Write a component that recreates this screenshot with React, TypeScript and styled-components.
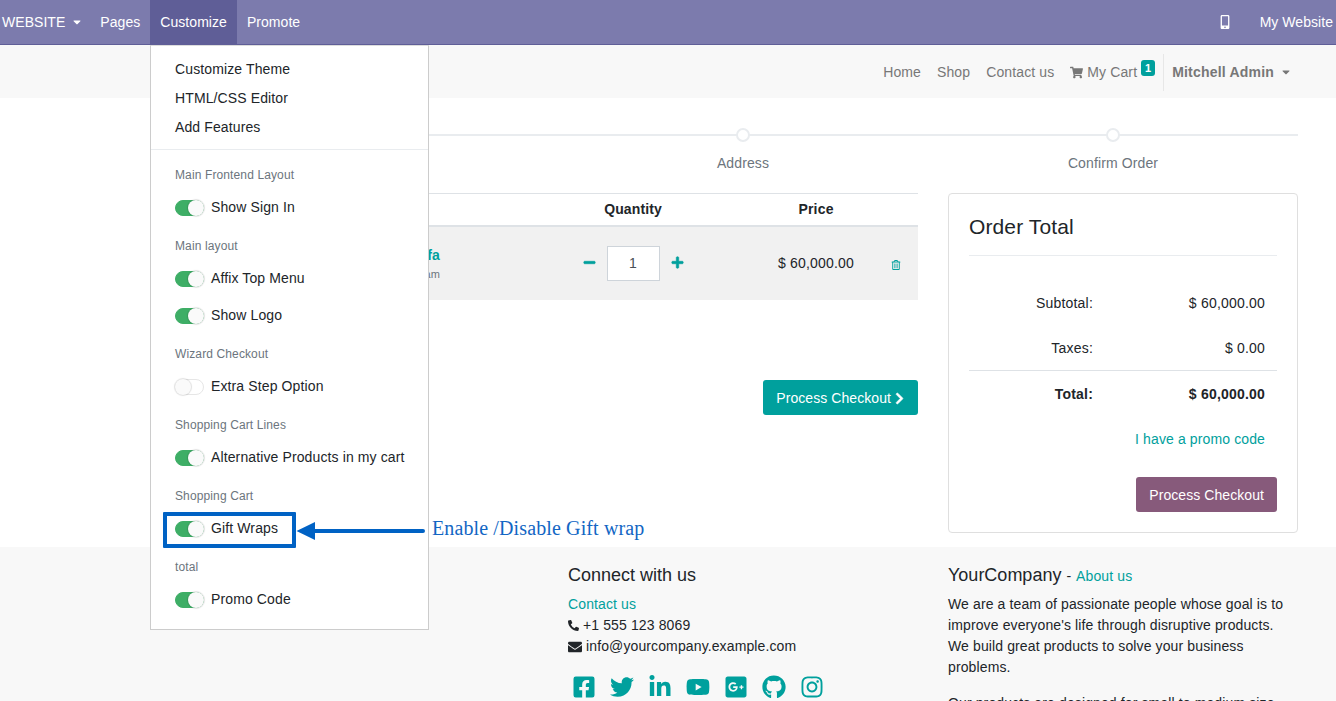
import styled, { createGlobalStyle } from 'styled-components';
import {
  FaCaretDown,
  FaChevronRight,
  FaEnvelope,
  FaFacebookSquare,
  FaGithub,
  FaGooglePlusSquare,
  FaInstagram,
  FaLinkedinIn,
  FaMinus,
  FaMobileAlt,
  FaPhoneAlt,
  FaPlus,
  FaRegTrashAlt,
  FaShoppingCart,
  FaTwitter,
  FaYoutube,
} from 'react-icons/fa';

const GlobalStyle = createGlobalStyle`
  html, body {
    margin: 0;
    height: 701px;
    overflow: hidden;
    background: #fff;
    font-family: "Liberation Sans", Arial, sans-serif;
    font-size: 14px;
    line-height: 21px;
    letter-spacing: 0.12px;
    color: #212529;
  }
  * { box-sizing: border-box; }
`;

const Page = styled.div`
  position: relative;
  width: 1336px;
  height: 701px;
  overflow: hidden;
`;

const TopBar = styled.div`
  display: flex;
  align-items: stretch;
  height: 45px;
  background: #7c7bad;
  border-bottom: 1px solid #5f5e97;
  color: #fff;
  letter-spacing: 0.05px;
`;

const TopItem = styled.div<{ $active?: boolean }>`
  display: flex;
  align-items: center;
  gap: 6px;
  height: 44px;
  padding: 0 10px;
  background: ${(p) => (p.$active ? '#5f5e97' : 'transparent')};
`;

const SiteItem = styled(TopItem)`
  padding: 0 7px 0 2px;
`;

const TopRight = styled.div`
  display: flex;
  align-items: center;
  margin-left: auto;
  padding-right: 3px;
`;

const PhoneIcon = styled.span`
  display: flex;
  margin-right: 28px;
  font-size: 14px;
`;

const NavBar = styled.nav`
  display: flex;
  align-items: center;
  justify-content: flex-end;
  height: 53px;
  padding: 1px 44px 0 0;
  background: #f8f8f8;
  color: #777;
`;

const NavLink = styled.span`
  margin-right: 16px;
`;

const CartLink = styled.span`
  display: flex;
  align-items: center;
  gap: 4px;
`;

const Badge = styled.span`
  align-self: flex-start;
  width: 14px;
  height: 16px;
  margin: 14px 8px 0 4px;
  border-radius: 3px;
  background: #00a09d;
  color: #fff;
  font-size: 11px;
  font-weight: 700;
  line-height: 16px;
  text-align: center;
`;

const UserLink = styled.span`
  display: flex;
  align-items: center;
  gap: 6px;
  height: 37px;
  padding-left: 8px;
  border-left: 1px solid #e7e7e7;
  font-weight: 700;
  letter-spacing: 0.2px;
`;

const Main = styled.main`
  height: 449px;
  padding: 30px 38px 0 188px;
`;

const Steps = styled.div`
  display: grid;
  grid-template-columns: repeat(3, 1fr);
  height: 65px;
  background: linear-gradient(#e9ecef, #e9ecef) 0 6px / 100% 2px no-repeat;
`;

const Step = styled.div`
  display: flex;
  flex-direction: column;
  align-items: center;
  gap: 11px;
  color: #6c757d;
`;

const StepDot = styled.span`
  width: 14px;
  height: 14px;
  border: 2px solid #e9ecef;
  border-radius: 50%;
  background: #fff;
`;

const CartGrid = styled.div`
  display: grid;
  grid-template-columns: 730px 350px;
  gap: 30px;
`;

const CartRow = styled.div`
  display: grid;
  grid-template-columns: 345px 200px 153px 32px;
  align-items: center;
`;

const CartHead = styled(CartRow)`
  height: 34px;
  border-top: 1px solid #dee2e6;
  border-bottom: 2px solid #dee2e6;
  font-weight: 700;
  text-align: center;
`;

const CartLine = styled(CartRow)`
  height: 73px;
  background: #f1f1f1;
`;

const PriceCol = styled.div`
  padding-left: 13px;
  letter-spacing: 0.2px;
  text-align: center;
`;

const Product = styled.div`
  padding-right: 93px;
  text-align: right;
`;

const ProductName = styled.div`
  color: #00a09d;
  font-weight: 700;
`;

const ProductNote = styled.div`
  color: #6c757d;
  font-size: 11px;
  line-height: 17px;
`;

const Quantity = styled.div`
  display: flex;
  align-items: center;
  justify-content: center;
  gap: 11px;
  margin-top: -1px;
  color: #00a09d;
  font-size: 13px;
`;

const QtyIcon = styled.span`
  display: flex;
  margin-top: -1px;

  svg {
    stroke: currentColor;
    stroke-width: 24px;
  }
`;

const QtyBox = styled.div`
  width: 53px;
  height: 35px;
  border: 1px solid #ced4da;
  background: #fff;
  color: #495057;
  font-size: 14px;
  line-height: 33px;
  text-align: center;
`;

const Trash = styled.div`
  display: flex;
  padding: 2px 0 0 5px;
  color: #00a09d;
  font-size: 10px;
`;

const CheckoutRow = styled.div`
  display: flex;
  justify-content: flex-end;
  margin-top: 80px;
`;

const Button = styled.div<{ $color: string }>`
  display: flex;
  align-items: center;
  gap: 2px;
  height: 35px;
  padding: 1px 13px 0;
  border-radius: 3px;
  background: ${(p) => p.$color};
  color: #fff;
  letter-spacing: 0.07px;

  svg {
    margin-right: -1px;
    stroke: currentColor;
    stroke-width: 24px;
  }
`;

const TotalCard = styled.section`
  display: flex;
  flex-direction: column;
  height: 340px;
  padding: 0 20px;
  border: 1px solid #dfdfdf;
  border-radius: 4px;
`;

const CardTitle = styled.h3`
  height: 62px;
  margin: 0;
  padding-top: 20px;
  border-bottom: 1px solid #e9ecef;
  font-size: 21px;
  font-weight: 400;
  line-height: 25px;
`;

const Totals = styled.div`
  padding-top: 25px;
`;

const TotalRow = styled.div<{ $strong?: boolean; $rule?: boolean }>`
  display: grid;
  grid-template-columns: 124px 172px;
  align-items: center;
  height: ${(p) => (p.$rule ? '47px' : '45px')};
  margin-top: ${(p) => (p.$rule ? '-1px' : '0')};
  border-top: ${(p) => (p.$rule ? '1px solid #dee2e6' : '0')};
  font-weight: ${(p) => (p.$strong ? 700 : 400)};
  letter-spacing: 0.2px;
  text-align: right;
`;

const PromoLink = styled.div`
  margin-top: 12px;
  padding-right: 12px;
  color: #00a09d;
  text-align: right;
`;

const CardAction = styled.div`
  display: flex;
  justify-content: flex-end;
  margin-top: 27px;
`;

const Footer = styled.footer`
  display: grid;
  grid-template-columns: 380px 380px 350px;
  height: 154px;
  padding: 16px 0 0 188px;
  background: #f8f8f8;
`;

const FooterTitle = styled.div`
  height: 24px;
  margin-bottom: 7px;
  font-size: 18px;
  letter-spacing: 0;
  line-height: 24px;
`;

const TealLink = styled.span`
  color: #00a09d;
  font-size: 14px;
  letter-spacing: 0.12px;
`;

const Dash = styled.span`
  font-size: 14px;
`;

const ContactLine = styled.div`
  display: flex;
  align-items: center;
  gap: 4px;
`;

const Socials = styled.div`
  display: flex;
  align-items: center;
  gap: 14px;
  margin: 18px 0 0 4px;
  color: #00a09d;
  font-size: 24px;
`;

const Para = styled.p`
  margin: 0 0 15px;
`;

const Menu = styled.div`
  position: absolute;
  top: 45px;
  left: 150px;
  width: 279px;
  height: 585px;
  padding-top: 9px;
  border: 1px solid #ccc;
  border-top-color: #ddd;
  background: #fff;
`;

const MenuLink = styled.div`
  height: 29px;
  padding-left: 24px;
  line-height: 29px;
`;

const MenuRule = styled.div`
  height: 1px;
  margin: 7px 0 9px;
  background: #e9ecef;
`;

const MenuHeader = styled.div`
  height: 30px;
  margin-top: 4px;
  padding: 7px 0 0 24px;
  color: #6c757d;
  font-size: 12px;
  line-height: 18px;
`;

const ToggleRow = styled.div`
  display: flex;
  align-items: center;
  gap: 7px;
  height: 37px;
  padding-left: 24px;
`;

const Toggle = styled.span<{ $on: boolean }>`
  position: relative;
  width: 29px;
  height: 16px;
  border: 1px solid ${(p) => (p.$on ? '#3eae66' : '#e6e6e6')};
  border-radius: 8px;
  background: ${(p) => (p.$on ? '#3eae66' : '#fff')};

  &::after {
    content: '';
    position: absolute;
    top: -1px;
    left: ${(p) => (p.$on ? '12px' : '-1px')};
    width: 16px;
    height: 16px;
    border-radius: 50%;
    background: #fafafa;
    box-shadow: 0 0 1px 1px rgba(0, 0, 0, 0.12);
  }
`;

const Highlight = styled.div`
  position: absolute;
  top: 512px;
  left: 163px;
  width: 133px;
  height: 36px;
  border: 4px solid #0062c4;
  border-radius: 1px;
`;

const Arrow = styled.svg`
  position: absolute;
  top: 520px;
  left: 296px;
`;

const Note = styled.div`
  position: absolute;
  top: 516px;
  left: 432px;
  color: #1266c4;
  font-family: "Liberation Serif", "Times New Roman", serif;
  font-size: 20px;
  line-height: 25px;
`;

const MENU = [
  { title: 'Main Frontend Layout', items: [['Show Sign In', true]] },
  { title: 'Main layout', items: [['Affix Top Menu', true], ['Show Logo', true]] },
  { title: 'Wizard Checkout', items: [['Extra Step Option', false]] },
  { title: 'Shopping Cart Lines', items: [['Alternative Products in my cart', true]] },
  { title: 'Shopping Cart', items: [['Gift Wraps', true]] },
  { title: 'total', items: [['Promo Code', true]] },
] as { title: string; items: [string, boolean][] }[];

export default function App() {
  return (
    <Page>
      <GlobalStyle />
      <TopBar>
        <SiteItem>
          WEBSITE <FaCaretDown size={12} />
        </SiteItem>
        <TopItem>Pages</TopItem>
        <TopItem $active>Customize</TopItem>
        <TopItem>Promote</TopItem>
        <TopRight>
          <PhoneIcon>
            <FaMobileAlt />
          </PhoneIcon>
          My Website
        </TopRight>
      </TopBar>

      <NavBar>
        <NavLink>Home</NavLink>
        <NavLink>Shop</NavLink>
        <NavLink>Contact us</NavLink>
        <CartLink>
          <FaShoppingCart size={13} />
          My Cart
        </CartLink>
        <Badge>1</Badge>
        <UserLink>
          Mitchell Admin
          <FaCaretDown size={12} />
        </UserLink>
      </NavBar>

      <Main>
        <Steps>
          <Step>
            <StepDot />
            Review Order
          </Step>
          <Step>
            <StepDot />
            Address
          </Step>
          <Step>
            <StepDot />
            Confirm Order
          </Step>
        </Steps>
        <CartGrid>
          <div>
            <CartHead>
              <div>Product</div>
              <div>Quantity</div>
              <PriceCol>Price</PriceCol>
              <div />
            </CartHead>
            <CartLine>
              <Product>
                <ProductName>Sofa</ProductName>
                <ProductNote>Team</ProductNote>
              </Product>
              <Quantity>
                <QtyIcon>
                  <FaMinus />
                </QtyIcon>
                <QtyBox>1</QtyBox>
                <QtyIcon>
                  <FaPlus />
                </QtyIcon>
              </Quantity>
              <PriceCol>$ 60,000.00</PriceCol>
              <Trash>
                <FaRegTrashAlt />
              </Trash>
            </CartLine>
            <CheckoutRow>
              <Button $color="#00a09d">
                Process Checkout <FaChevronRight size={13} />
              </Button>
            </CheckoutRow>
          </div>
          <TotalCard>
            <CardTitle>Order Total</CardTitle>
            <Totals>
              <TotalRow>
                <div>Subtotal:</div>
                <div>$ 60,000.00</div>
              </TotalRow>
              <TotalRow>
                <div>Taxes:</div>
                <div>$ 0.00</div>
              </TotalRow>
              <TotalRow $strong $rule>
                <div>Total:</div>
                <div>$ 60,000.00</div>
              </TotalRow>
            </Totals>
            <PromoLink>I have a promo code</PromoLink>
            <CardAction>
              <Button $color="#875a7b">Process Checkout</Button>
            </CardAction>
          </TotalCard>
        </CartGrid>
      </Main>

      <Footer>
        <div />
        <div>
          <FooterTitle>Connect with us</FooterTitle>
          <TealLink>Contact us</TealLink>
          <ContactLine>
            <FaPhoneAlt size={11} /> +1 555 123 8069
          </ContactLine>
          <ContactLine>
            <FaEnvelope size={14} /> info@yourcompany.example.com
          </ContactLine>
          <Socials>
            <FaFacebookSquare />
            <FaTwitter />
            <FaLinkedinIn />
            <FaYoutube />
            <FaGooglePlusSquare />
            <FaGithub />
            <FaInstagram />
          </Socials>
        </div>
        <div>
          <FooterTitle>
            YourCompany <Dash>-</Dash> <TealLink>About us</TealLink>
          </FooterTitle>
          <Para>
            We are a team of passionate people whose goal is to improve everyone's life through disruptive
            products. We build great products to solve your business problems.
          </Para>
          <Para>Our products are designed for small to medium size companies willing to optimize their performance.</Para>
        </div>
      </Footer>

      <Menu>
        <MenuLink>Customize Theme</MenuLink>
        <MenuLink>HTML/CSS Editor</MenuLink>
        <MenuLink>Add Features</MenuLink>
        <MenuRule />
        {MENU.map((group) => (
          <div key={group.title}>
            <MenuHeader>{group.title}</MenuHeader>
            {group.items.map(([label, on]) => (
              <ToggleRow key={label}>
                <Toggle $on={on} />
                {label}
              </ToggleRow>
            ))}
          </div>
        ))}
      </Menu>

      <Highlight />
      <Arrow width="132" height="22" viewBox="0 0 132 22">
        <path d="M0.5 11 L19 2 V9 H127 a2 2 0 0 1 0 4 H19 V20 Z" fill="#0062c4" />
      </Arrow>
      <Note>Enable /Disable Gift wrap</Note>
    </Page>
  );
}
